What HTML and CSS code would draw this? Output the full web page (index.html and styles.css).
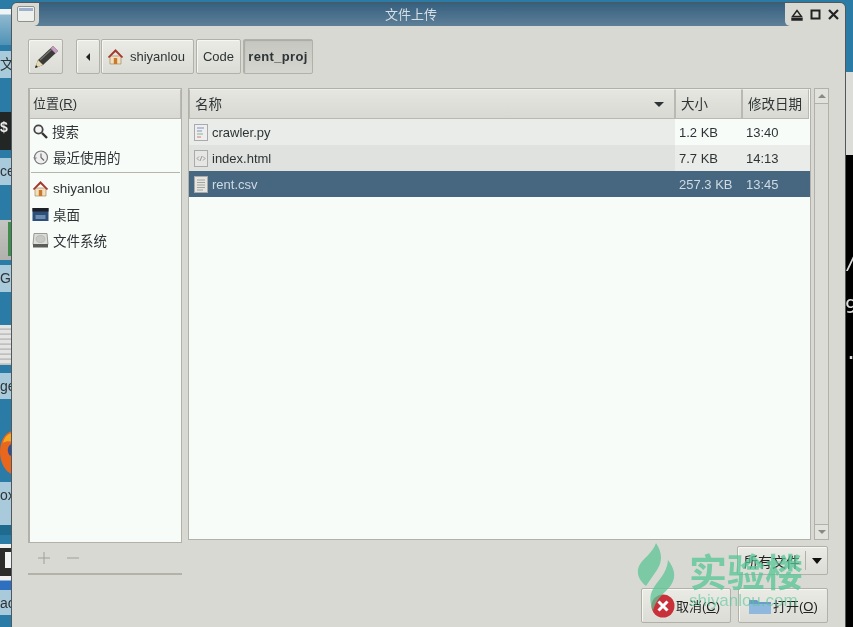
FILE: index.html
```html
<!DOCTYPE html>
<html lang="en">
<head>
    <meta charset="UTF-8">
    <meta name="viewport" content="width=device-width, initial-scale=1.0">
    <title>文件上传</title>
    <link rel="stylesheet" href="styles.css">
</head>
<body>
    <div class="desktop">
        <!-- desktop icons peeking out on the left of the dialog -->
        <div class="peek peek-top"></div>
        <div class="peek peek-label label-wen">文</div>
        <div class="peek peek-term">$ .</div>
        <div class="peek peek-label label-ce">ce</div>
        <div class="peek peek-gv"></div>
        <div class="peek peek-gv-mark"></div>
        <div class="peek peek-label label-gv">GV</div>
        <div class="peek peek-doc"></div>
        <div class="peek peek-label label-ge">ge</div>
        <svg class="peek peek-fox" width="12" height="46" viewBox="0 0 12 46">
            <path d="M12 1C4 3 0 12 0 22s5 20 12 22z" fill="#e8671c"/>
            <path d="M12 3C7 4 4 8 3 13c3-2 6-2 9-1z" fill="#f6a623"/>
            <path d="M12 14c-2 0-5 3-4 8 1 3 2 4 4 4z" fill="#2f4f9a"/>
        </svg>
        <div class="peek peek-label label-ox">ox</div>
        <div class="peek peek-bar"></div>
        <div class="peek peek-dark"><span></span></div>
        <div class="peek peek-stripe"></div>
        <div class="peek peek-label label-ac">ac</div>

        <!-- terminal on the right of the dialog -->
        <div class="side-right">
            <div class="side-blue"></div>
            <div class="side-light"></div>
            <div class="side-term">
                <span class="t1">/</span>
                <span class="t2">9</span>
                <span class="t3">.</span>
            </div>
        </div>

        <div class="window">
            <div class="titlebar">
                <div class="tb-left">
                    <svg width="18" height="16" viewBox="0 0 18 16">
                        <rect x="0.5" y="0.5" width="17" height="15" rx="1.5" fill="#eef0ee" stroke="#8d938f"/>
                        <rect x="2" y="2" width="14" height="3" fill="#9db0cf"/>
                    </svg>
                </div>
                <div class="tb-title">文件上传</div>
                <div class="tb-right">
                    <svg width="12" height="12" viewBox="0 0 12 12"><path d="M6 1.5 10.5 7.5h-9zM1 9.5h10v1.5H1z" fill="none" stroke="#222" stroke-width="1.4"/></svg>
                    <svg width="11" height="11" viewBox="0 0 11 11"><rect x="1.5" y="1.5" width="8" height="8" fill="none" stroke="#222" stroke-width="2"/></svg>
                    <svg width="11" height="11" viewBox="0 0 11 11"><path d="M1 1l9 9M10 1l-9 9" stroke="#222" stroke-width="2.2"/></svg>
                </div>
            </div>

            <div class="content">
                <div class="toolbar">
                    <button class="btn btn-edit">
                        <svg width="28" height="28" viewBox="0 0 28 28">
                            <path d="M3 25l3-8L21 3l5 5-15 14z" fill="#3a3a38"/>
                            <path d="M6 17l5 5-8 3z" fill="#e6d9b0"/>
                            <path d="M3 25l1-3 2 2z" fill="#222"/>
                            <path d="M21 3l5 5-2.5 2.5-5-5z" fill="#c79ac4"/>
                            <path d="M8 17 20 6" stroke="#77776f" stroke-width="1.2"/>
                        </svg>
                    </button>
                    <div class="path">
                        <button class="btn crumb crumb-back"><span class="arrow-left"></span></button>
                        <button class="btn crumb crumb-home">
                            <svg width="17" height="17" viewBox="0 0 17 17"><use href="#home"/></svg>
                            shiyanlou
                        </button>
                        <button class="btn crumb crumb-code">Code</button>
                        <button class="btn crumb crumb-active">rent_proj</button>
                    </div>
                </div>

                <div class="panes">
                    <div class="left-col">
                        <div class="sidebar">
                            <div class="col-head side-head">位置(<u>R</u>)</div>
                            <div class="place first">
                                <svg width="16" height="16" viewBox="0 0 16 16"><circle cx="6.5" cy="6.5" r="4.2" fill="#f4f6f4" stroke="#444" stroke-width="1.8"/><path d="M10 10l5 5" stroke="#333" stroke-width="2.4"/></svg>
                                <span>搜索</span>
                            </div>
                            <div class="place">
                                <svg width="17" height="17" viewBox="0 0 17 17"><circle cx="9" cy="8.5" r="6.5" fill="#eee" stroke="#777" stroke-width="1.2"/><path d="M9 4.5v4l3 3" fill="none" stroke="#666" stroke-width="1.1"/><path d="M1 8.5h4L3 11z" fill="#888"/></svg>
                                <span>最近使用的</span>
                            </div>
                            <div class="side-sep"></div>
                            <div class="place">
                                <svg width="17" height="17" viewBox="0 0 17 17"><use href="#home"/></svg>
                                <span>shiyanlou</span>
                            </div>
                            <div class="place">
                                <svg width="17" height="17" viewBox="0 0 17 17"><rect x="0.5" y="2" width="16" height="13" fill="#2d4f7a"/><rect x="0.5" y="2" width="16" height="3.5" fill="#1c1f24"/><rect x="3.5" y="9" width="10" height="4" fill="#6d8db0"/></svg>
                                <span>桌面</span>
                            </div>
                            <div class="place">
                                <svg width="17" height="17" viewBox="0 0 17 17"><path d="M2 1.5h13l1 11H1z" fill="#dcdcd8" stroke="#9a9a94"/><ellipse cx="8.5" cy="7" rx="4.5" ry="3.5" fill="#c8c8c4" stroke="#aaa" stroke-width=".6"/><rect x="1" y="12" width="15" height="3.5" fill="#5c5c58"/></svg>
                                <span>文件系统</span>
                            </div>
                        </div>
                        <div class="side-tools">
                            <svg width="14" height="14" viewBox="0 0 14 14"><path d="M7 1v12M1 7h12" stroke="#a0a09a"/></svg>
                            <svg width="14" height="14" viewBox="0 0 14 14"><path d="M1 7h12" stroke="#a0a09a"/></svg>
                        </div>
                        <div class="side-rule"></div>
                    </div>

                    <div class="right-col">
                        <div class="list-row">
                            <div class="filelist">
                                <div class="head-row">
                                    <div class="col-head c-name">名称<span class="arrow-down"></span></div>
                                    <div class="col-head c-size">大小</div>
                                    <div class="col-head c-date">修改日期</div>
                                </div>
                                <div class="file-row odd">
                                    <div class="c-name cell">
                                        <svg width="14" height="17" viewBox="0 0 14 17"><rect x="0.5" y="0.5" width="13" height="16" fill="#eee" stroke="#aaa"/><path d="M3 4h7M3 7h5" stroke="#7f93c0"/><path d="M3 10h6" stroke="#8bb38b"/><path d="M3 13h4" stroke="#cf7f7f"/></svg>
                                        <span>crawler.py</span>
                                    </div>
                                    <div class="c-size cell"><span>1.2 KB</span></div>
                                    <div class="c-date cell"><span>13:40</span></div>
                                </div>
                                <div class="file-row even">
                                    <div class="c-name cell">
                                        <svg width="14" height="17" viewBox="0 0 14 17"><rect x="0.5" y="0.5" width="13" height="16" fill="#e6e6e4" stroke="#aaa"/><path d="M5 6.5 3 8.5l2 2M9 6.5l2 2-2 2M8 6l-2 5" fill="none" stroke="#999"/></svg>
                                        <span>index.html</span>
                                    </div>
                                    <div class="c-size cell"><span>7.7 KB</span></div>
                                    <div class="c-date cell"><span>14:13</span></div>
                                </div>
                                <div class="file-row selected">
                                    <div class="c-name cell">
                                        <svg width="14" height="17" viewBox="0 0 14 17"><rect x="0.5" y="0.5" width="13" height="16" fill="#e4e4e0" stroke="#aaa"/><path d="M3 4h8M3 6.5h8M3 9h8M3 11.5h8M3 14h6" stroke="#a5a5a0"/></svg>
                                        <span>rent.csv</span>
                                    </div>
                                    <div class="c-size cell"><span>257.3 KB</span></div>
                                    <div class="c-date cell"><span>13:45</span></div>
                                </div>
                            </div>
                            <div class="scrollbar">
                                <div class="sb-btn"><span class="sb-up"></span></div>
                                <div class="sb-thumb"></div>
                                <div class="sb-btn"><span class="sb-down"></span></div>
                            </div>
                        </div>

                        <div class="filter-row">
                            <button class="btn combo">
                                <span class="combo-text">所有文件</span>
                                <span class="combo-arrow"><span class="arrow-down big"></span></span>
                            </button>
                        </div>

                        <div class="action-row">
                            <button class="btn action">
                                <svg width="24" height="24" viewBox="0 0 24 24"><circle cx="12" cy="12" r="11.5" fill="#c8313a"/><path d="M7.5 7.5l9 9M16.5 7.5l-9 9" stroke="#fff" stroke-width="3"/></svg>
                                <span>取消(<u>C</u>)</span>
                            </button>
                            <button class="btn action">
                                <svg width="24" height="18" viewBox="0 0 24 18"><path d="M1 3h8l2 2h12v12H1z" fill="#6d9bc9"/><path d="M1 7h22v10H1z" fill="#8fb8de"/></svg>
                                <span>打开(<u>O</u>)</span>
                            </button>
                        </div>
                    </div>
                </div>
            </div>
        </div>

        <!-- site watermark over the dialog -->
        <div class="watermark">
            <svg width="40" height="68" viewBox="0 0 40 68">
                <path d="M19 0c6 9 7 18 1 27L9 43C2 38-1 30 2 23 5 16 16 10 19 0z" fill="#5dc596"/>
                <path d="M31 17c6 8 9 16 3 25-5 8-14 11-18 26-3-8-4-15 0-22 4-8 14-15 15-29z" fill="#5dc596"/>
            </svg>
            <div class="wm-text">
                <div class="wm-cn">实验楼</div>
                <div class="wm-en">shiyanlou.com</div>
            </div>
        </div>

        <svg class="defs" width="0" height="0">
            <symbol id="home" viewBox="0 0 17 17">
                <path d="M3 8v8h11V8z" fill="#f2dfc0" stroke="#a5895f" stroke-width=".7"/>
                <path d="M8.5 1 .8 9l1.4 1L8.5 4l6.3 6 1.4-1z" fill="#a5382c"/>
                <rect x="6.8" y="10" width="3.4" height="6" fill="#c8792c"/>
            </symbol>
        </svg>
    </div>
</body>
</html>
```

FILE: styles.css
```css
html, body {
    margin: 0;
    padding: 0;
}
body {
    font-family: "Liberation Sans", "Noto Sans CJK SC", sans-serif;
    font-size: 13px;
    color: #2e3436;
}
button {
    font-family: inherit;
    font-size: inherit;
    color: inherit;
    padding: 0;
}
.desktop {
    position: relative;
    width: 853px;
    height: 627px;
    overflow: hidden;
    background-color: #2a7ba5;
    filter: blur(.4px);
}
.defs {
    position: absolute;
}

/* desktop icons on the left */
.peek {
    position: absolute;
    left: 0;
    width: 12px;
    overflow: hidden;
}
.peek-top {
    top: 9px;
    height: 36px;
    background: linear-gradient(#f1f4f5 0, #f1f4f5 5px, #8fb9cf 6px, #4f92b6 100%);
}
.peek-label {
    background-color: #a9cadb;
    font-size: 14px;
    line-height: 27px;
    white-space: nowrap;
}
.label-wen { top: 51px; height: 27px; }
.label-ce { top: 158px; height: 27px; }
.label-gv { top: 265px; height: 27px; }
.label-ge { top: 373px; height: 26px; }
.label-ox { top: 482px; height: 43px; }
.label-ac { top: 590px; height: 25px; }
.peek-term {
    top: 112px;
    height: 38px;
    background-color: #222625;
    color: #eee;
    font-weight: bold;
    font-size: 14px;
    line-height: 30px;
    white-space: nowrap;
}
.peek-gv {
    top: 220px;
    height: 40px;
    background: linear-gradient(#c4c4c0, #b0b0ac);
}
.peek-gv-mark {
    top: 222px;
    left: 8px;
    width: 4px;
    height: 34px;
    background-color: #3c8f4a;
}
.peek-doc {
    top: 325px;
    height: 40px;
    background: repeating-linear-gradient(#e4e4e2 0, #e4e4e2 3px, #aeb0b0 4px, #d0d0ce 5px);
}
.peek-fox {
    top: 430px;
}
.peek-bar {
    top: 525px;
    height: 10px;
    background-color: #1f6a8f;
}
.peek-dark {
    top: 544px;
    height: 32px;
    background-color: #2e2c2a;
    border-top: 4px solid #f0f0f0;
    box-sizing: border-box;
}
.peek-dark span {
    display: block;
    width: 7px;
    height: 16px;
    margin: 4px 0 0 5px;
    background-color: #f4f4f4;
}
.peek-stripe {
    top: 576px;
    height: 14px;
    background: linear-gradient(#f0f0f0 0, #f0f0f0 4px, #2f6fc0 5px);
}

/* right strip */
.side-right {
    position: absolute;
    left: 845px;
    top: 0;
    width: 8px;
    height: 627px;
    display: flex;
    flex-direction: column;
}
.side-blue {
    height: 72px;
}
.side-light {
    height: 83px;
    background-color: #dcdcd8;
}
.side-term {
    flex: 1;
    background-color: #000;
    color: #ddd;
    font-family: "DejaVu Sans Mono", monospace;
    font-size: 20px;
    line-height: 26px;
    position: relative;
}
.side-term span {
    position: absolute;
    left: 0;
}
.t1 { top: 94px; }
.t2 { top: 138px; }
.t3 { top: 184px; }

/* dialog */
.window {
    position: absolute;
    left: 12px;
    top: 3px;
    width: 833px;
    height: 624px;
    background-color: #d9d9d3;
    border-radius: 5px 5px 0 0;
    box-shadow: 0 0 0 1px #50585c;
    display: flex;
    flex-direction: column;
}
.titlebar {
    display: flex;
    height: 23px;
    background: linear-gradient(#35607f, #5e7f97);
    border-radius: 5px 5px 0 0;
}
.tb-left {
    width: 27px;
    background-color: #d9d9d3;
    padding: 3px 0 0 5px;
    box-sizing: border-box;
    border-radius: 5px 0 5px 0;
}
.tb-title {
    flex: 1;
    text-align: center;
    color: #d8dfe4;
    line-height: 23px;
    padding-right: 2px;
}
.tb-right {
    width: 60px;
    background-color: #d9d9d3;
    box-sizing: border-box;
    display: flex;
    align-items: center;
    gap: 7px;
    padding: 0 0 0 6px;
    border-radius: 0 5px 0 5px;
}
.content {
    padding: 13px 16px 0;
}
.btn {
    background: linear-gradient(#ebebe6, #dcdcd6);
    border: 1px solid #b1b1a9;
    border-radius: 2px;
    box-shadow: inset 1px 1px 0 #f6f6f2;
    box-sizing: border-box;
}
.toolbar {
    display: flex;
    height: 35px;
    gap: 13px;
}
.btn-edit {
    width: 35px;
    display: flex;
    align-items: center;
    justify-content: center;
}
.path {
    display: flex;
    gap: 1px;
}
.crumb {
    display: flex;
    align-items: center;
    justify-content: center;
    gap: 6px;
}
.crumb-back { width: 24px; }
.crumb-home {
    width: 93px;
    justify-content: flex-start;
    padding-left: 5px;
}
.crumb-code { width: 45px; margin-left: 1px; }
.crumb-active {
    width: 70px;
    margin-left: 1px;
    font-weight: bold;
    letter-spacing: .35px;
    background: linear-gradient(#c6c6c0, #d6d6d0);
    box-shadow: inset 1px 1px 1px #aaaaa3;
}
.arrow-left {
    border-top: 4px solid transparent;
    border-bottom: 4px solid transparent;
    border-right: 4px solid #222;
}
.arrow-down {
    border-left: 5px solid transparent;
    border-right: 5px solid transparent;
    border-top: 5px solid #2e3436;
}
.arrow-down.big {
    display: block;
    border-top-width: 6px;
    border-top-color: #111;
}

.panes {
    display: flex;
    gap: 6px;
    margin-top: 14px;
}
.left-col {
    width: 154px;
}
.sidebar {
    height: 455px;
    box-sizing: border-box;
    background-color: #f8fcf9;
    border: 1px solid #b1b1a9;
    border-left-width: 2px;
}
.col-head {
    background: linear-gradient(#e6e6e0, #d9d9d3);
    border: 1px solid #b9b9b1;
    border-top-color: #eeeeea;
    box-sizing: border-box;
    height: 30px;
    line-height: 29px;
    padding-left: 5px;
    font-size: 13.5px;
}
.side-head {
    border-left: 0;
    padding-left: 3px;
    font-size: 13px;
    line-height: 28px;
}
.place {
    display: flex;
    align-items: center;
    gap: 4px;
    height: 26px;
    padding-left: 2px;
    font-size: 13.5px;
}
.place.first {
    margin-top: -1px;
}
.place svg {
    flex: none;
}
.side-sep {
    height: 1px;
    background-color: #b5b5ad;
    margin: 2px 1px;
}
.side-tools {
    display: flex;
    gap: 15px;
    padding: 8px 0 0 9px;
    height: 23px;
    box-sizing: border-box;
}
.side-rule {
    height: 2px;
    margin-top: 7px;
    background-color: #b2b2ab;
}
.right-col {
    width: 641px;
}
.list-row {
    display: flex;
    height: 452px;
    gap: 3px;
}
.filelist {
    width: 623px;
    box-sizing: border-box;
    background-color: #f8fcf9;
    border: 1px solid #b1b1a9;
}
.head-row,
.file-row {
    display: flex;
}
.c-name {
    width: 486px;
}
.c-size {
    width: 67px;
}
.c-date {
    width: 67px;
}
.head-row .c-name {
    display: flex;
    align-items: center;
    justify-content: space-between;
    padding-right: 10px;
}
.file-row {
    height: 26px;
    line-height: 26px;
}
.cell {
    box-sizing: border-box;
    padding-left: 4px;
    display: flex;
    align-items: center;
    white-space: nowrap;
}
.cell span {
    position: relative;
    top: 1px;
}
.file-row .c-name {
    padding-left: 5px;
    gap: 4px;
}
.odd .c-name { background-color: #e9ece8; }
.even { background-color: #e9ece8; }
.even .c-name { background-color: #dfe2de; }
.selected {
    background-color: #46677f;
    color: #cfdae2;
}
.selected .c-name {
    background-color: #46677f;
}
.scrollbar {
    width: 15px;
    box-sizing: border-box;
    border: 1px solid #b1b1a9;
    display: flex;
    flex-direction: column;
    background-color: #cfcfc9;
}
.sb-btn {
    height: 14px;
    display: flex;
    align-items: center;
    justify-content: center;
    background-color: #e2e2dc;
    flex: none;
}
.sb-thumb {
    flex: 1;
    background-color: #dcdcd6;
    border: 1px solid #b1b1a9;
    border-width: 1px 0;
}
.sb-up {
    border-left: 4px solid transparent;
    border-right: 4px solid transparent;
    border-bottom: 4px solid #8a8a84;
}
.sb-down {
    border-left: 4px solid transparent;
    border-right: 4px solid transparent;
    border-top: 4px solid #8a8a84;
}
.filter-row {
    display: flex;
    justify-content: flex-end;
    margin-top: 6px;
    padding-right: 1px;
}
.combo {
    width: 91px;
    height: 29px;
    display: flex;
    align-items: center;
}
.combo-text {
    width: 67px;
    text-align: left;
    padding-left: 6px;
    box-sizing: border-box;
    color: #222;
    font-size: 14px;
    white-space: nowrap;
}
.combo-arrow {
    flex: 1;
    height: 19px;
    border-left: 1px solid #b1b1a9;
    display: flex;
    align-items: center;
    justify-content: center;
}
.action-row {
    display: flex;
    justify-content: flex-end;
    gap: 7px;
    margin-top: 13px;
    padding-right: 1px;
}
.action {
    width: 90px;
    height: 35px;
    display: flex;
    align-items: center;
    gap: 1px;
    padding-left: 9px;
    color: #222;
    white-space: nowrap;
}

/* watermark */
.watermark {
    position: absolute;
    left: 637px;
    top: 543px;
    display: flex;
    gap: 12px;
    opacity: .75;
    pointer-events: none;
}
.wm-text {
    color: #55c796;
}
.wm-cn {
    font-family: "Noto Sans CJK SC", sans-serif;
    font-size: 38px;
    font-weight: bold;
    line-height: 40px;
    margin-top: 7px;
}
.wm-en {
    font-size: 17px;
    line-height: 18px;
    margin-top: 2px;
    white-space: nowrap;
    opacity: .8;
}
```
